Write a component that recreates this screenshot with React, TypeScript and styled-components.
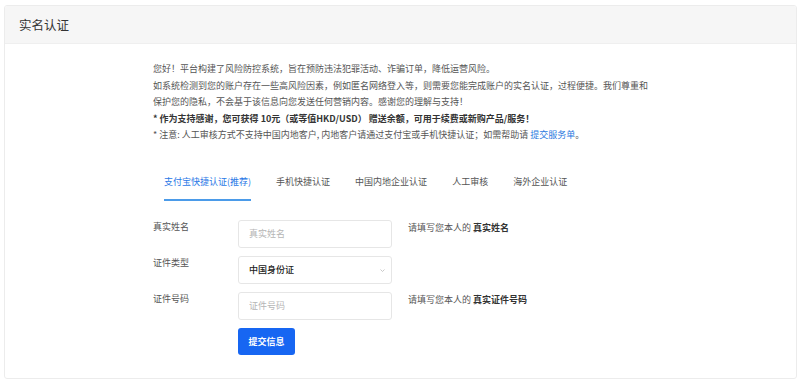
import React, { useState } from "react";
import styled, { createGlobalStyle } from "styled-components";

const GlobalStyle = createGlobalStyle`
  body {
    margin: 5px 3px 0 4px;
    background: #ffffff;
    font-family: "Noto Sans CJK SC", "Noto Sans", "Liberation Sans", sans-serif;
    color: #555;
  }
  * {
    box-sizing: border-box;
  }
`;

const Card = styled.div`
  width: 793px;
  border: 1px solid #ececec;
  border-radius: 3px;
  background: #fff;
  overflow: hidden;
`;

const CardHeader = styled.div`
  height: 38px;
  background: #f6f6f6;
  border-bottom: 1px solid #efefef;
  display: flex;
  align-items: center;
  padding-left: 14px;
  font-size: 12.5px;
  color: #333;
`;

const CardBody = styled.div`
  padding: 17px 0 23px 148px;
`;

const Intro = styled.div`
  width: 500px;
  font-size: 9px;
  line-height: 16.5px;
  color: #555;
`;

const Line = styled.p<{ $bold?: boolean }>`
  margin: 0;
  font-weight: ${(p) => (p.$bold ? 700 : 400)};
  color: ${(p) => (p.$bold ? "#333" : "#555")};
`;

const LinkText = styled.a`
  color: #2b79e0;
  text-decoration: none;
  cursor: pointer;
`;

const Tabs = styled.div`
  display: flex;
  gap: 25px;
  margin-top: 22px;
  padding-left: 11px;
`;

const Tab = styled.div<{ $active?: boolean }>`
  padding: 9px 0 10px;
  font-size: 9px;
  line-height: 14px;
  color: ${(p) => (p.$active ? "#2a78e6" : "#555")};
  border-bottom: 2px solid ${(p) => (p.$active ? "#4b9be9" : "transparent")};
  cursor: pointer;
`;

const Form = styled.div`
  margin-top: 19px;
  display: flex;
  flex-direction: column;
  gap: 8px;
`;

const Row = styled.div`
  display: flex;
  align-items: flex-start;
`;

const Label = styled.div`
  width: 85px;
  font-size: 9px;
  line-height: 14px;
  color: #555;
`;

const Input = styled.input`
  width: 154px;
  height: 28px;
  border: 1px solid #e6e6e6;
  border-radius: 3px;
  padding: 0 10px;
  font-size: 9px;
  font-family: inherit;
  color: #333;
  outline: none;
  &::placeholder {
    color: #b5b5b5;
  }
`;

const SelectBox = styled.div`
  position: relative;
  width: 154px;
  height: 28px;
  border: 1px solid #e6e6e6;
  border-radius: 3px;
  padding: 0 10px;
  display: flex;
  align-items: center;
  font-size: 9px;
  font-weight: 500;
  color: #222;
`;

const Chevron = styled.svg`
  position: absolute;
  right: 6px;
  top: 12px;
`;

const Hint = styled.div`
  margin-left: 16px;
  padding-top: 1px;
  font-size: 9px;
  line-height: 14px;
  color: #555;
  b {
    color: #333;
  }
`;

const SubmitButton = styled.button`
  margin-left: 85px;
  width: 57px;
  height: 27px;
  padding: 0;
  border: none;
  border-radius: 3px;
  background: #1766f2;
  color: #fff;
  font-size: 9px;
  font-weight: 700;
  font-family: inherit;
  cursor: pointer;
`;

const tabs = ["支付宝快捷认证(推荐)", "手机快捷认证", "中国内地企业认证", "人工审核", "海外企业认证"];

const App: React.FC = () => {
  const [active, setActive] = useState(0);

  return (
    <>
      <GlobalStyle />
      <Card>
        <CardHeader>实名认证</CardHeader>
        <CardBody>
          <Intro>
            <Line>您好！平台构建了风险防控系统，旨在预防违法犯罪活动、诈骗订单，降低运营风险。</Line>
            <Line>
              如系统检测到您的账户存在一些高风险因素，例如匿名网络登入等，则需要您能完成账户的实名认证，过程便捷。我们尊重和保护您的隐私，不会基于该信息向您发送任何营销内容。感谢您的理解与支持！
            </Line>
            <Line $bold>* 作为支持感谢，您可获得 10元（或等值HKD/USD） 赠送余额，可用于续费或新购产品/服务！</Line>
            <Line>
              * 注意: 人工审核方式不支持中国内地客户, 内地客户请通过支付宝或手机快捷认证；如需帮助请 <LinkText>提交服务单</LinkText>。
            </Line>
          </Intro>

          <Tabs>
            {tabs.map((t, i) => (
              <Tab key={t} $active={i === active} onClick={() => setActive(i)}>
                {t}
              </Tab>
            ))}
          </Tabs>

          <Form>
            <Row>
              <Label>真实姓名</Label>
              <Input placeholder="真实姓名" />
              <Hint>
                请填写您本人的 <b>真实姓名</b>
              </Hint>
            </Row>
            <Row>
              <Label>证件类型</Label>
              <SelectBox>
                中国身份证
                <Chevron width="5" height="3" viewBox="0 0 5 3">
                  <path d="M0.5 0.5 L2.5 2.5 L4.5 0.5" fill="none" stroke="#bbb" strokeWidth="0.8" />
                </Chevron>
              </SelectBox>
            </Row>
            <Row>
              <Label>证件号码</Label>
              <Input placeholder="证件号码" />
              <Hint>
                请填写您本人的 <b>真实证件号码</b>
              </Hint>
            </Row>
            <Row>
              <SubmitButton>提交信息</SubmitButton>
            </Row>
          </Form>
        </CardBody>
      </Card>
    </>
  );
};

export default App;
